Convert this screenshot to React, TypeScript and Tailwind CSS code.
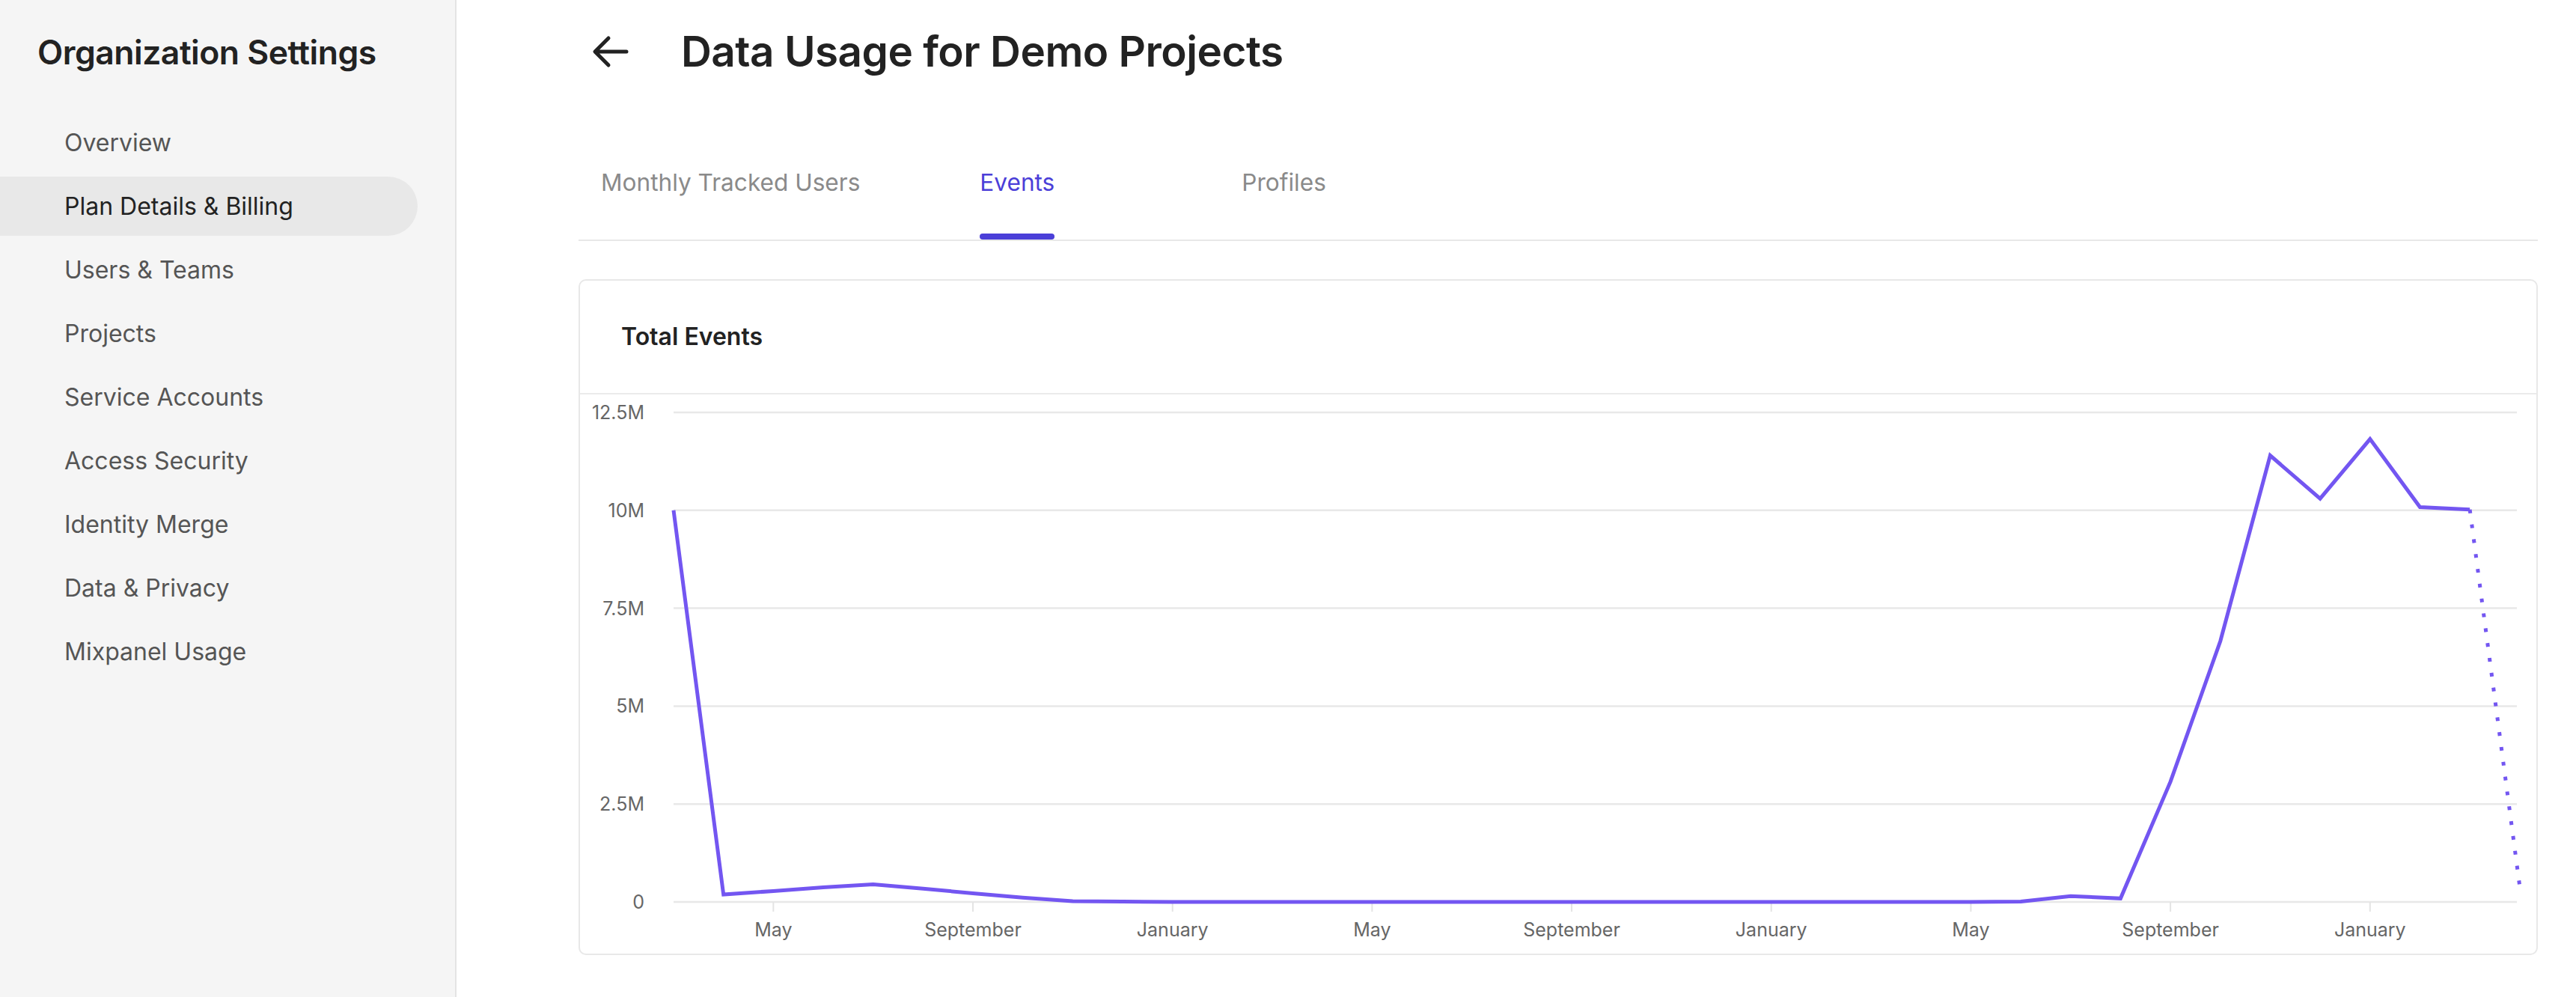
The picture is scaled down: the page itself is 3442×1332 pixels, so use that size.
import React from "react";

const FONT = { fontFamily: "Inter, Lato, 'Noto Sans', Arial, sans-serif" };

const navItems = [
  "Overview",
  "Plan Details & Billing",
  "Users & Teams",
  "Projects",
  "Service Accounts",
  "Access Security",
  "Identity Merge",
  "Data & Privacy",
  "Mixpanel Usage",
];

const values: number[] = [
  10, 0.19, 0.28, 0.37, 0.45, 0.34, 0.22, 0.11, 0.02, 0.01,
  0, 0, 0, 0, 0, 0, 0, 0, 0, 0, 0, 0, 0, 0, 0, 0, 0,
  0.01, 0.15, 0.09, 3.07, 6.66, 11.4, 10.3, 11.82, 10.08, 10.02,
];
const lastDotted = 0.4;

const X0 = 125;
const STEP = 66.67;
const Y0 = 678;
const YSTEP = 130.8;
const yOf = (v: number) => Y0 - (v / 2.5) * YSTEP;
const xOf = (i: number) => X0 + i * STEP;

const yTicks = [
  { label: "12.5M", v: 12.5 },
  { label: "10M", v: 10 },
  { label: "7.5M", v: 7.5 },
  { label: "5M", v: 5 },
  { label: "2.5M", v: 2.5 },
  { label: "0", v: 0 },
];

const xTicks = [
  { label: "May", i: 2 },
  { label: "September", i: 6 },
  { label: "January", i: 10 },
  { label: "May", i: 14 },
  { label: "September", i: 18 },
  { label: "January", i: 22 },
  { label: "May", i: 26 },
  { label: "September", i: 30 },
  { label: "January", i: 34 },
];

function Chart() {
  const solid = values.map((v, i) => `${xOf(i).toFixed(1)},${yOf(v).toFixed(1)}`).join(" ");
  const li = values.length - 1;
  return (
    <svg width="2614" height="746" viewBox="0 0 2614 746" className="block">
      {yTicks.map((t) => (
        <g key={t.label}>
          <line x1={X0} x2={2588} y1={yOf(t.v)} y2={yOf(t.v)} stroke="#e8e8e8" strokeWidth={2.5} />
          <text
            x={86}
            y={yOf(t.v) + 9}
            textAnchor="end"
            fontSize={25}
            fill="#666666"
            style={FONT}
          >
            {t.label}
          </text>
        </g>
      ))}
      {xTicks.map((t, k) => (
        <g key={k}>
          <line x1={xOf(t.i)} x2={xOf(t.i)} y1={Y0} y2={Y0 + 13} stroke="#e4e4e4" strokeWidth={2} />
          <text x={xOf(t.i)} y={Y0 + 46} textAnchor="middle" fontSize={25} fill="#666666" style={FONT}>
            {t.label}
          </text>
        </g>
      ))}
      <polyline
        points={solid}
        fill="none"
        stroke="#7356f1"
        strokeWidth={5}
        strokeLinejoin="miter"
        strokeLinecap="butt"
      />
      <line
        x1={xOf(li)}
        y1={yOf(values[li])}
        x2={xOf(li + 1)}
        y2={yOf(lastDotted)}
        stroke="#7356f1"
        strokeWidth={5}
        strokeDasharray="5 15"
      />
    </svg>
  );
}

export default function App() {
  return (
    <div className="flex w-[3442px] h-[1332px] bg-white overflow-hidden" style={FONT}>
      {/* Sidebar */}
      <aside className="w-[610px] shrink-0 h-full bg-[#f5f5f5] border-r-2 border-[#e4e4e4]">
        <h1 className="pl-[50px] pt-[45px] text-[44.5px] leading-[50px] font-semibold text-[#222222] tracking-[-0.5px]">
          Organization Settings
        </h1>
        <nav className="mt-[56px] flex flex-col">
          {navItems.map((item) => {
            const active = item === "Plan Details & Billing";
            return (
              <div
                key={item}
                className={
                  active
                    ? "w-[558px] h-[79px] mb-[6px] flex items-center pl-[86px] rounded-r-full bg-[#e8e8e8] text-[#222222] text-[32px]"
                    : "w-[558px] h-[79px] mb-[6px] flex items-center pl-[86px] text-[#555555] text-[32px]"
                }
              >
                {item}
              </div>
            );
          })}
        </nav>
      </aside>

      {/* Main */}
      <main className="flex-1 pl-[163px] pr-[51px]">
        <div className="flex items-center h-[138px] pl-[18px]">
          <svg width="50" height="46" viewBox="0 0 50 46">
            <path
              d="M46 23 H5 M22 5 L4 23 L22 41"
              fill="none"
              stroke="#222222"
              strokeWidth={5}
              strokeLinecap="round"
              strokeLinejoin="round"
            />
          </svg>
          <h2 className="ml-[69px] text-[56.6px] font-semibold text-[#222222] leading-none tracking-[-0.5px]">
            Data Usage for Demo Projects
          </h2>
        </div>

        <div className="h-[184px] border-b-2 border-[#e8e8e8]">
          <div className="flex items-start pt-[86px] pl-[30px] text-[31.6px] leading-[40px]">
            <span className="text-[#8a8a8a]">Monthly Tracked Users</span>
            <span className="relative ml-[160px] text-[#4b3fd8]">
              Events
              <span className="absolute left-0 right-0 top-[88px] h-[8px] rounded-full bg-[#4b3fd8]" />
            </span>
            <span className="ml-[250px] text-[#8a8a8a]">Profiles</span>
          </div>
        </div>

        <div className="mt-[51px] w-[2618px] h-[903px] border-2 border-[#e8e8e8] rounded-[10px] overflow-hidden">
          <div className="h-[152px] border-b-2 border-[#ebebeb] flex items-center pl-[55px]">
            <span className="text-[32px] font-semibold text-[#222222]">Total Events</span>
          </div>
          <Chart />
        </div>
      </main>
    </div>
  );
}
